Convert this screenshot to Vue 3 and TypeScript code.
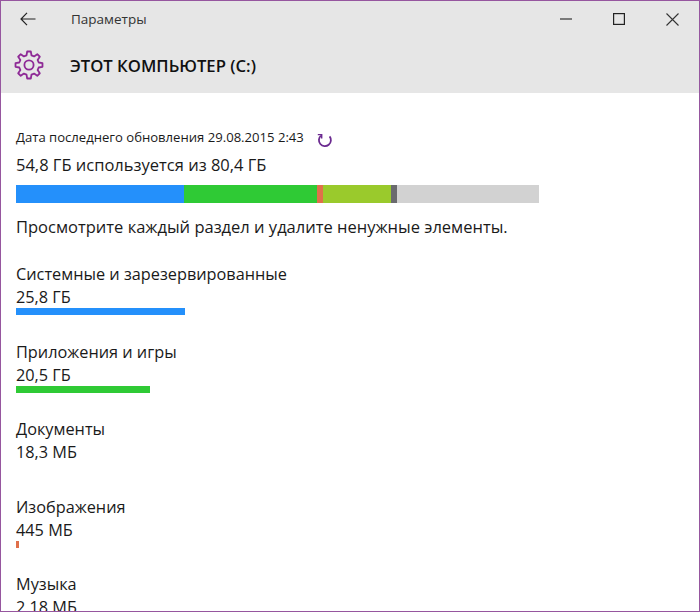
<template>
  <div class="window">
    <header class="header">
      <div class="titlebar">
        <button class="back" aria-label="Назад">
          <svg width="16" height="14" viewBox="0 0 16 14" fill="none" stroke="#222" stroke-width="1.2">
            <path d="M15.5 7H1M7 .8 1 7l6 6.2" />
          </svg>
        </button>
        <span class="app-name">Параметры</span>
        <div class="controls">
          <svg width="12" height="12" viewBox="0 0 12 12" stroke="#333" fill="none" stroke-width="1.2"><path d="M0 6h12" /></svg>
          <svg width="12" height="12" viewBox="0 0 12 12" stroke="#222" fill="none" stroke-width="1.2"><rect x=".6" y=".6" width="10.8" height="10.8" /></svg>
          <svg width="13" height="13" viewBox="0 0 13 13" stroke="#333" fill="none" stroke-width="1.1"><path d="M.5.5l12 12M12.5.5l-12 12" /></svg>
        </div>
      </div>
      <div class="page-title">
        <svg class="gear" width="30" height="30" viewBox="0 0 30 30" fill="none" stroke="#8e2a96" stroke-width="1.8" stroke-linejoin="round">
          <circle cx="15" cy="15" r="4.6" />
          <path :d="gearPath" />
        </svg>
        <h1>ЭТОТ КОМПЬЮТЕР (C:)</h1>
      </div>
    </header>

    <main class="content">
      <div class="updated">
        <span>Дата последнего обновления 29.08.2015 2:43</span>
        <svg class="refresh" width="16" height="16" viewBox="0 0 16 16" fill="none" stroke="#6b2a90" stroke-width="1.8">
          <path d="M4 3.6A6 6 0 1 0 12.6 4.4" />
          <path d="M.8 2.6h3.9v4" stroke-width="1.4" />
        </svg>
      </div>
      <p class="usage">54,8 ГБ используется из 80,4 ГБ</p>

      <div class="total-bar">
        <i v-for="s in segments" :key="s.color" :style="{ width: s.width + 'px', background: s.color }"></i>
      </div>

      <p class="hint">Просмотрите каждый раздел и удалите ненужные элементы.</p>

      <section v-for="item in items" :key="item.name" class="item">
        <div class="name">{{ item.name }}</div>
        <div class="size">{{ item.size }}</div>
        <div class="track">
          <i :style="{ width: item.bar + 'px', background: item.color }"></i>
        </div>
      </section>
    </main>
  </div>
</template>

<script setup lang="ts">
interface Item {
  name: string
  size: string
  bar: number
  color: string
}

const segments = [
  { width: 168, color: '#2490fb' },
  { width: 133, color: '#2fca35' },
  { width: 6, color: '#e0704a' },
  { width: 68, color: '#9aca2c' },
  { width: 6, color: '#6a6a6e' },
  { width: 142, color: '#d2d2d2' },
]

const items: Item[] = [
  { name: 'Системные и зарезервированные', size: '25,8 ГБ', bar: 169, color: '#2490fb' },
  { name: 'Приложения и игры', size: '20,5 ГБ', bar: 134, color: '#2fca35' },
  { name: 'Документы', size: '18,3 МБ', bar: 0, color: '#e0704a' },
  { name: 'Изображения', size: '445 МБ', bar: 3, color: '#e0704a' },
  { name: 'Музыка', size: '2,18 МБ', bar: 0, color: '#9aca2c' },
]

// Eight-tooth gear outline, built around the centre of the 30x30 box
const gearPath = (() => {
  const teeth = 8
  const outer = 13.6
  const inner = 10
  let d = ''
  for (let i = 0; i < teeth; i++) {
    const step = (Math.PI * 2) / teeth
    const a = i * step - Math.PI / 2
    const pts: [number, number][] = [
      [inner, a - step * 0.32],
      [outer, a - step * 0.17],
      [outer, a + step * 0.17],
      [inner, a + step * 0.32],
    ]
    for (const [r, t] of pts) {
      const x = (15 + r * Math.cos(t)).toFixed(2)
      const y = (15 + r * Math.sin(t)).toFixed(2)
      d += (d ? 'L' : 'M') + x + ' ' + y
    }
  }
  return d + 'Z'
})()
</script>

<style>
html,
body {
  margin: 0;
  height: 100%;
  overflow: hidden;
  background: #fff;
}
</style>

<style scoped>
.window {
  box-sizing: border-box;
  width: 700px;
  height: 612px;
  overflow: hidden;
  border: 1px solid #96569f;
  background: #fff;
  color: #1a1a1a;
  font-family: 'Open Sans', 'Noto Sans', sans-serif;
}

.header {
  height: 92px;
  background: #e6e6e6;
  display: flex;
  flex-direction: column;
}

.titlebar {
  height: 36px;
  display: flex;
  align-items: center;
  padding-left: 19px;
}

.back {
  display: flex;
  border: 0;
  padding: 0;
  background: none;
}

.app-name {
  margin-left: 35px;
  font-size: 13.5px;
  color: #333;
}

.controls {
  margin-left: auto;
  display: flex;
  align-items: center;
  gap: 41px;
  padding-right: 20px;
}

.page-title {
  display: flex;
  align-items: center;
  gap: 26px;
  padding: 13px 0 0 13px;
}

.gear {
  flex: none;
}

h1 {
  margin: 0;
  font-size: 16.7px;
  font-weight: 600;
  color: #111;
}

.content {
  padding: 34px 0 0 15px;
}

.updated {
  display: flex;
  align-items: center;
  height: 20px;
  font-size: 13.1px;
}

.refresh {
  margin-left: 13px;
  margin-top: 5px;
}

.usage {
  margin: 7px 0 0;
  font-size: 16.5px;
  line-height: 21px;
}

.total-bar {
  display: flex;
  width: 523px;
  height: 18px;
  margin-top: 10px;
}

.total-bar i {
  display: block;
}

.hint {
  margin: 13px 0 0;
  font-size: 16.5px;
  line-height: 22px;
}

.item {
  height: 77.5px;
  font-size: 16.3px;
}

.hint + .item {
  margin-top: 25px;
}

.name {
  line-height: 23px;
}

.size {
  line-height: 23px;
  margin-bottom: -1px;
}

.track {
  height: 7px;
}

.track i {
  display: block;
  height: 100%;
}
</style>
